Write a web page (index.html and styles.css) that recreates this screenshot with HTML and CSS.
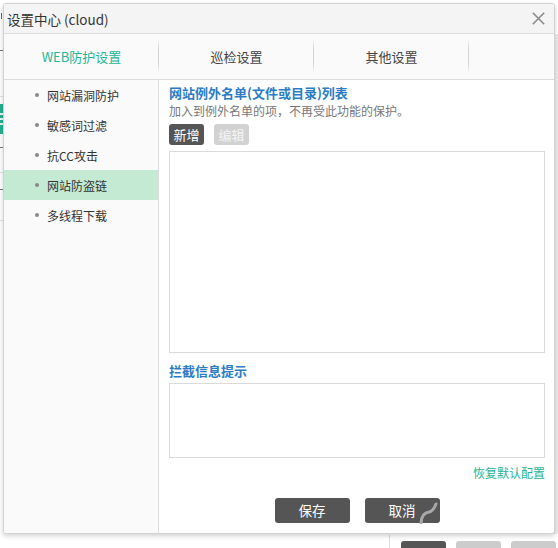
FILE: index.html
```html
<!DOCTYPE html>
<html>
<head>
<meta charset="utf-8">
<link rel="stylesheet" href="styles.css">
</head>
<body>
<div class="page">
  <div class="page-left">
    <span class="pl-tick"></span>
    <span class="pl-mark pl-m1"></span>
    <span class="pl-menu"><i></i><i></i><i></i></span>
    <span class="pl-mark pl-m2"></span>
    <span class="pl-mark pl-m3"></span>
    <span class="pl-rule pl-r1"></span>
    <span class="pl-rule pl-r2"></span>
    <span class="pl-rule pl-r3"></span>
  </div>
  <div class="page-right"></div>
  <div class="page-bottom">
    <span class="pb-line"></span>
    <span class="pb-btn pb-dark"></span>
    <span class="pb-btn pb-light"></span>
    <span class="pb-btn pb-light"></span>
  </div>
</div>

<div class="dialog">
  <div class="titlebar">
    <span class="title">设置中心 (cloud)</span>
    <svg class="close" width="13" height="13" viewBox="0 0 13 13"><path d="M0.8 0.8 L12.2 12.2 M12.2 0.8 L0.8 12.2" stroke="#8a8a8a" stroke-width="1.6" fill="none"/></svg>
  </div>
  <div class="tabs">
    <div class="tab active">WEB防护设置</div>
    <div class="tab">巡检设置</div>
    <div class="tab">其他设置</div>
  </div>
  <div class="body">
    <ul class="menu">
      <li class="item"><span class="dot"></span>网站漏洞防护</li>
      <li class="item"><span class="dot"></span>敏感词过滤</li>
      <li class="item"><span class="dot"></span>抗CC攻击</li>
      <li class="item selected"><span class="dot"></span>网站防盗链</li>
      <li class="item"><span class="dot"></span>多线程下载</li>
    </ul>
    <div class="content">
      <div class="heading">网站例外名单(文件或目录)列表</div>
      <div class="hint">加入到例外名单的项，不再受此功能的保护。</div>
      <div class="tools">
        <span class="sbtn dark">新增</span>
        <span class="sbtn light">编辑</span>
      </div>
      <div class="listbox"></div>
      <div class="heading heading2">拦截信息提示</div>
      <div class="msgbox"></div>
      <div class="reset">恢复默认配置</div>
      <div class="actions">
        <span class="btn">保存</span>
        <span class="btn cancel">取消
          <svg class="spin" width="20" height="24" viewBox="0 0 20 24"><path d="M2 23 C2.5 15 6 12.5 10 12 C13 11.5 15 9 17 4" stroke="#a8a8a8" stroke-width="3" fill="none" stroke-linecap="round"/></svg>
        </span>
      </div>
    </div>
  </div>
</div>
</body>
</html>
```
FILE: styles.css
```css
html, body {
  margin: 0;
  padding: 0;
  background: #ffffff;
  width: 558px;
  height: 548px;
  overflow: hidden;
  font-family: "Noto Sans CJK SC", "Noto Sans", sans-serif;
}
.page {
  position: absolute;
  left: 0;
  top: 0;
  width: 558px;
  height: 548px;
  z-index: 0;
}
.page-left {
  position: absolute;
  left: 0;
  top: 0;
  width: 4px;
  height: 548px;
  overflow: hidden;
}
.pl-tick {
  position: absolute;
  left: 1px;
  top: 13px;
  width: 1px;
  height: 6px;
  background: #666;
}
.pl-mark {
  position: absolute;
  left: 0;
  width: 3px;
  height: 10px;
  border-right: 1px solid #555;
  border-top: 1px solid #777;
}
.pl-m1 { top: 50px; }
.pl-m2 { top: 147px; }
.pl-m3 { top: 189px; }
.pl-rule {
  position: absolute;
  left: 0;
  width: 4px;
  height: 1px;
  background: #e2e2e2;
}
.pl-r1 { top: 96px; }
.pl-r2 { top: 172px; }
.pl-r3 { top: 220px; }
.pl-menu {
  position: absolute;
  left: 0;
  top: 104px;
  width: 4px;
  height: 30px;
  background: #20b28f;
  display: flex;
  flex-direction: column;
  justify-content: center;
  gap: 3px;
}
.pl-menu i {
  display: block;
  height: 2px;
  background: #e8f8f3;
}
.page-right {
  position: absolute;
  right: 0;
  top: 34px;
  width: 3px;
  height: 500px;
  background: #ececec;
  border-left: 1px solid #dcdcdc;
}
.page-bottom {
  position: absolute;
  left: 0;
  top: 535px;
  width: 558px;
  height: 13px;
}
.pb-line {
  position: absolute;
  left: 389px;
  top: 0;
  width: 1px;
  height: 13px;
  background: #dddddd;
}
.pb-btn {
  position: absolute;
  top: 6px;
  width: 45px;
  height: 20px;
  border-radius: 3px;
}
.pb-dark { left: 401px; background: #555555; }
.pb-light { left: 456px; background: #cccccc; }
.pb-light + .pb-light { left: 511px; }

.dialog {
  position: relative;
  z-index: 1;
  margin: 3px 0 0 3px;
  width: 550px;
  height: 529px;
  border: 1px solid #d2d2d2;
  border-radius: 3px;
  background: #ffffff;
  box-shadow: 0 2px 5px rgba(0, 0, 0, 0.18);
  display: flex;
  flex-direction: column;
  overflow: hidden;
}
.titlebar {
  height: 29px;
  flex: none;
  background: #f4f4f4;
  border-bottom: 1px solid #dcdcdc;
  display: flex;
  align-items: center;
  justify-content: space-between;
  padding: 0 9px 0 3px;
}
.title {
  font-size: 13.5px;
  color: #333333;
  line-height: 18px;
}
.close {
  display: block;
}
.tabs {
  height: 45px;
  flex: none;
  background: #fafafa;
  border-bottom: 1px solid #dcdcdc;
  display: flex;
}
.tab {
  width: 155px;
  position: relative;
  display: flex;
  align-items: center;
  justify-content: center;
  font-size: 13px;
  color: #444444;
  padding-bottom: 1px;
}
.tab::after {
  content: "";
  position: absolute;
  right: 0;
  top: 4px;
  bottom: 5px;
  width: 1px;
  background: linear-gradient(to bottom, rgba(210,210,210,0), #d4d4d4 30%, #d4d4d4 70%, rgba(210,210,210,0));
}
.tab.active {
  color: #1fb596;
}
.body {
  flex: 1;
  display: flex;
  min-height: 0;
}
.menu {
  list-style: none;
  margin: 0;
  padding: 0;
  width: 154px;
  flex: none;
  background: #fafafa;
  border-right: 1px solid #dcdcdc;
}
.item {
  height: 30px;
  display: flex;
  align-items: center;
  padding-left: 31px;
  font-size: 12px;
  color: #333333;
}
.item.selected {
  background: #c5ead3;
}
.dot {
  width: 4px;
  height: 4px;
  border-radius: 50%;
  background: #888888;
  margin-right: 8px;
}
.content {
  flex: 1;
  padding: 4px 9px 0 10px;
  display: flex;
  flex-direction: column;
}
.heading {
  font-size: 13px;
  font-weight: bold;
  color: #2b7cc4;
  line-height: 18px;
}
.heading2 {
  margin-top: 9px;
}
.hint {
  font-size: 12px;
  color: #777777;
  line-height: 17px;
  margin-top: 0;
}
.tools {
  display: flex;
  gap: 10px;
  margin-top: 5px;
}
.sbtn {
  width: 35px;
  height: 21px;
  border-radius: 3px;
  font-size: 13px;
  line-height: 21px;
  text-align: center;
  color: #ffffff;
}
.sbtn.dark { background: #555555; }
.sbtn.light { background: #d2d2d2; color: #f4f4f4; }
.listbox {
  margin-top: 6px;
  height: 200px;
  border: 1px solid #dadada;
  background: #ffffff;
}
.msgbox {
  margin-top: 3px;
  height: 73px;
  border: 1px solid #dadada;
  background: #ffffff;
}
.reset {
  text-align: right;
  font-size: 12px;
  color: #1fb596;
  line-height: 16px;
  margin-top: 7px;
}
.actions {
  display: flex;
  justify-content: center;
  gap: 15px;
  margin-top: 17px;
}
.btn {
  position: relative;
  width: 75px;
  height: 25px;
  border-radius: 3px;
  background: #555555;
  color: #ffffff;
  font-size: 13.5px;
  line-height: 25px;
  text-align: center;
}
.spin {
  position: absolute;
  right: 1px;
  bottom: -1px;
}
```
